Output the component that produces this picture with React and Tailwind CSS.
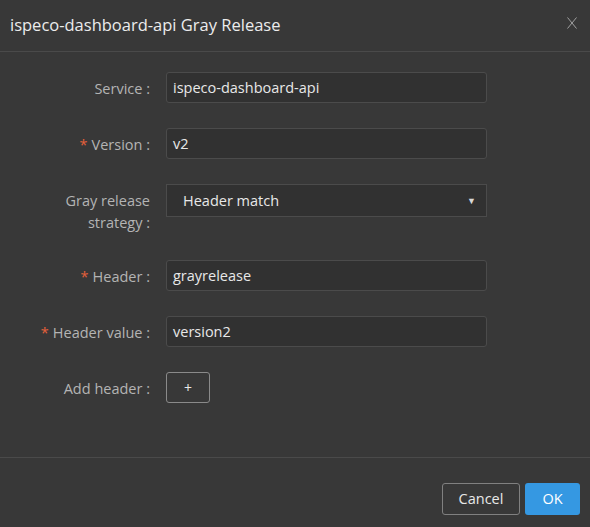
import React from 'react';

const Field = ({ label, required, children, twoLine }) => (
  <div className={`flex items-start ${twoLine ? 'h-[51px]' : 'h-[31px]'}`}>
    <label className={`w-[150px] shrink-0 text-right text-[14.5px] text-[#b4b4b4] ${twoLine ? 'leading-[22px] pt-[6px]' : 'h-[31px] leading-[33px]'}`}>
      {required && <span className="text-[#e5603b] mr-[4px]">*</span>}
      {label}
    </label>
    <div className="ml-[16px] w-[321px]">{children}</div>
  </div>
);

const TextInput = ({ value }) => (
  <div className="h-[31px] rounded-[3px] border border-[#4b4b4b] bg-[#313131] px-[6px] text-[14.5px] leading-[29px] text-[#e8e8e8]">
    {value}
  </div>
);

export default function App() {
  return (
    <div className="w-[590px] h-[527px] bg-[#383838] flex flex-col" style={{ fontFamily: '"Open Sans", "Noto Sans", sans-serif' }}>
      <div className="h-[52px] shrink-0 border-b border-[#4a4a4a] flex items-center justify-between pl-[10px] pr-[13px]">
        <h2 className="text-[16.5px] text-[#ececec]">ispeco-dashboard-api Gray Release</h2>
        <svg width="10" height="12" viewBox="0 0 10 12" className="mb-[5px]">
          <path d="M0.5 0.5 L9.5 11.5 M9.5 0.5 L0.5 11.5" stroke="#a0a0a0" strokeWidth="1" fill="none" />
        </svg>
      </div>

      <div className="flex-1 flex flex-col gap-[25px] pt-[20px]">
        <Field label="Service :">
          <TextInput value="ispeco-dashboard-api" />
        </Field>
        <Field label="Version :" required>
          <TextInput value="v2" />
        </Field>
        <Field label={<>Gray release<br />strategy :</>} twoLine>
          <div className="h-[33px] border border-[#4b4b4b] bg-[#313131] pl-[16px] pr-[10px] flex items-center justify-between text-[14.5px] text-[#e8e8e8]">
            <span>Header match</span>
            <span className="text-[9px] text-[#d8d8d8]">▼</span>
          </div>
        </Field>
        <Field label="Header :" required>
          <TextInput value="grayrelease" />
        </Field>
        <Field label="Header value :" required>
          <TextInput value="version2" />
        </Field>
        <Field label="Add header :">
          <button className="w-[44px] h-[31px] rounded-[3px] border border-[#8a8a8a] bg-transparent text-[14px] text-[#e8e8e8]">+</button>
        </Field>
      </div>

      <div className="h-[70px] shrink-0 border-t border-[#4a4a4a] flex items-start justify-end gap-[5px] pt-[25px] pr-[10px]">
        <button className="w-[78px] h-[32px] rounded-[3px] border border-[#808080] text-[14.5px] text-[#e8e8e8]">Cancel</button>
        <button className="w-[55px] h-[32px] rounded-[3px] bg-[#3598e2] text-[14.5px] text-white">OK</button>
      </div>
    </div>
  );
}
